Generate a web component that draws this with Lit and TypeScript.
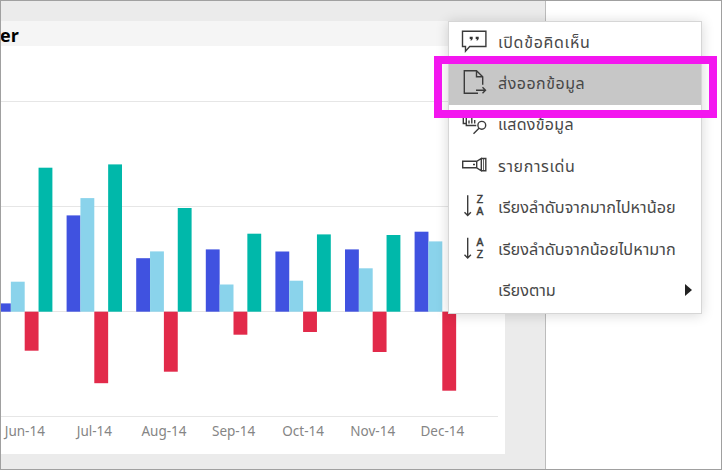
import { LitElement, html, svg, css } from "lit";
import { customElement } from "lit/decorators.js";
import { styleMap } from "lit/directives/style-map.js";

type Month = { label: string; blue: number; light: number; red: number; teal: number };

const MONTHS: Month[] = [
  { label: "Jun-14", blue: 8.3, light: 30, red: 39, teal: 144 },
  { label: "Jul-14", blue: 96.3, light: 113.6, red: 71.5, teal: 147.3 },
  { label: "Aug-14", blue: 53.5, light: 60.3, red: 60, teal: 103.7 },
  { label: "Sep-14", blue: 62.3, light: 27.2, red: 23, teal: 78 },
  { label: "Oct-14", blue: 60.2, light: 31, red: 20.3, teal: 77.3 },
  { label: "Nov-14", blue: 62.3, light: 43.4, red: 40.3, teal: 76.7 },
  { label: "Dec-14", blue: 80, light: 70.3, red: 79, teal: 0 },
];
const PITCH = 69.6;
const BAR = 13.85;
const ZERO = 265.7;

@customElement("bar-chart")
export class BarChart extends LitElement {
  static styles = css`
    :host { display: block; }
    svg { display: block; width: 504px; height: 375px; }
    .grid { stroke: #e6e6e6; stroke-width: 1; }
    .blue { fill: #4052e0; }
    .light { fill: #8ad3eb; }
    .red { fill: #e22a4a; }
    .teal { fill: #00b8aa; }
    .labels { display: flex; margin-left: -11px; }
    .labels span {
      flex: none; width: 69.6px; text-align: center; white-space: nowrap;
      font: 13.5px/20px "Noto Sans", "Open Sans", sans-serif; color: #858585;
    }
  `;
  render() {
    return html`
      <svg viewBox="0 0 504 375">
        ${[55.5, 160.5, 265.5, 370.5].map((y) => svg`<line class="grid" x1="0" x2="497" y1=${y} y2=${y} />`)}
        ${MONTHS.map((m, i) => {
          const x = -4 + i * PITCH;
          return svg`
            <rect class="blue" x=${x} y=${ZERO - m.blue} width=${BAR} height=${m.blue} />
            <rect class="light" x=${x + BAR} y=${ZERO - m.light} width=${BAR} height=${m.light} />
            <rect class="red" x=${x + BAR * 2} y=${ZERO} width=${BAR} height=${m.red} />
            <rect class="teal" x=${x + BAR * 3} y=${ZERO - m.teal} width=${BAR} height=${m.teal} />`;
        })}
      </svg>
      <div class="labels">${MONTHS.map((m) => html`<span>${m.label}</span>`)}</div>
    `;
  }
}

const ICONS = {
  comment: svg`<path d="M1.500 1.300h23.400v15.200h-16.200l-4.200 4.600v-4.600h-3z"/><path class="solid" d="M8.700 6.800h3v2.300l-1.300 1.500h-1l.5-1.500h-1.200zM14.700 6.800h3v2.300l-1.300 1.500h-1l.5-1.500h-1.200z"/>`,
  export: svg`<path d="M17 22.300h-13.700v-22.600h12.200l6.200 6v8M15.500 -0.300v6h6.200M15 19.200h9.500M21.500 16.200l3 3-3 3"/>`,
  data: svg`<path d="M2.300 4v7.500h3v2h10M5.300 4v7.500M8 8.500v3M10.800 6v5.500M13.700 8v3.500M18 16.300l-5.500 5.500"/><circle cx="20.800" cy="13.300" r="3.900"/>`,
  spotlight: svg`<path d="M1.700 7.300h14v6.500h-14zM15.700 7.300l4.600-2.800v12.300l-4.600-3zM20.300 4.500h4.500v12.300h-4.500M12 10.500h2"/><path class="thin" d="M22.500 4.500v12.300"/>`,
  desc: svg`<path d="M6.700 0.300v20M3.500 17.300l3.200 3.200 3.200-3.200"/><text x="19" y="7.900">Z</text><text x="19" y="20.100">A</text>`,
  asc: svg`<path d="M6.700 0.800v20M3.500 17.800l3.200 3.200 3.200-3.200"/><text x="19" y="8.700">A</text><text x="19" y="20.800">Z</text>`,
  none: svg``,
};

const ITEMS: { icon: keyof typeof ICONS; text: string; track?: number; size?: number; active?: boolean; sub?: boolean }[] = [
  { icon: "comment", text: "เปิดข้อคิดเห็น", track: 0.7 },
  { icon: "export", text: "ส่งออกข้อมูล", track: 0.5, active: true },
  { icon: "data", text: "แสดงข้อมูล", track: 0.3 },
  { icon: "spotlight", text: "รายการเด่น", track: 0.62 },
  { icon: "desc", text: "เรียงลำดับจากมากไปหาน้อย", size: 16.25 },
  { icon: "asc", text: "เรียงลำดับจากน้อยไปหามาก", size: 16.25 },
  { icon: "none", text: "เรียงตาม", size: 16.25, sub: true },
];

@customElement("context-menu")
export class ContextMenu extends LitElement {
  static styles = css`
    :host {
      display: block; box-sizing: border-box; width: 254px; height: 293px;
      border: 1px solid #d6d6d6; background: #fff;
      box-shadow: 0 1px 12px rgba(0, 0, 0, 0.16);
    }
    .item { display: flex; align-items: center; height: 41.4px; color: #484848; }
    .active { background: #c7c7c7; }
    .icon { flex: none; width: 26px; height: 26px; margin: 0 11px 0 12px; overflow: visible; fill: none; stroke: #3b3b3b; stroke-width: 1.400; }
    .icon text { fill: #3b3b3b; stroke-width: 0.5; text-anchor: middle; font: 10.3px "Liberation Sans", sans-serif; }
    .solid { fill: #333; stroke: none; }
    .thin { stroke-width: 0.8; }
    .text {
      flex: 1; padding-bottom: 2px; white-space: nowrap;
      font: 16px/24px "Noto Sans", "Noto Sans Thai", sans-serif;
    }
    .arrow { width: 7px; height: 12px; margin: 0 9.500px 3px 0; fill: #222; }
  `;
  render() {
    return ITEMS.map((it) => html`
      <div class="item ${it.active ? "active" : ""}">
        <svg class="icon" viewBox="0 0 26 26">${ICONS[it.icon]}</svg>
        <span class="text" style=${styleMap({
          letterSpacing: it.track ? `${it.track}px` : undefined,
          fontSize: it.size ? `${it.size}px` : undefined,
        })}>${it.text}</span>
        ${it.sub ? html`<svg class="arrow" viewBox="0 0 7 12"><path d="M0 0l7 6-7 6z" /></svg>` : ""}
      </div>`);
  }
}

@customElement("app-root")
export class AppRoot extends LitElement {
  static styles = css`
    :host {
      display: block; position: relative; box-sizing: border-box; width: 722px; height: 470px;
      border: 1px solid #a0a0a0; background: #fff; overflow: hidden;
    }
    .canvas {
      box-sizing: border-box; width: 545px; height: 468px; padding-top: 20px;
      background: #ebebeb; border-right: 1px solid #bcbcbc;
    }
    .tile { width: 504px; height: 433px; background: #fff; overflow: hidden; }
    .title {
      height: 25px; background: #f5f5f5; color: #000; margin: 0;
      font: 700 18px/29px "Open Sans", "Noto Sans", sans-serif; text-indent: -1px;
    }
    context-menu { position: absolute; left: 447px; top: 20px; }
    .marker {
      position: absolute; left: 433px; top: 55px; box-sizing: border-box;
      width: 283px; height: 62px; border: 8px solid #f316ef;
    }
  `;
  render() {
    return html`
      <div class="canvas">
        <section class="tile">
          <h2 class="title">er</h2>
          <bar-chart></bar-chart>
        </section>
      </div>
      <context-menu></context-menu>
      <div class="marker"></div>
    `;
  }
}
